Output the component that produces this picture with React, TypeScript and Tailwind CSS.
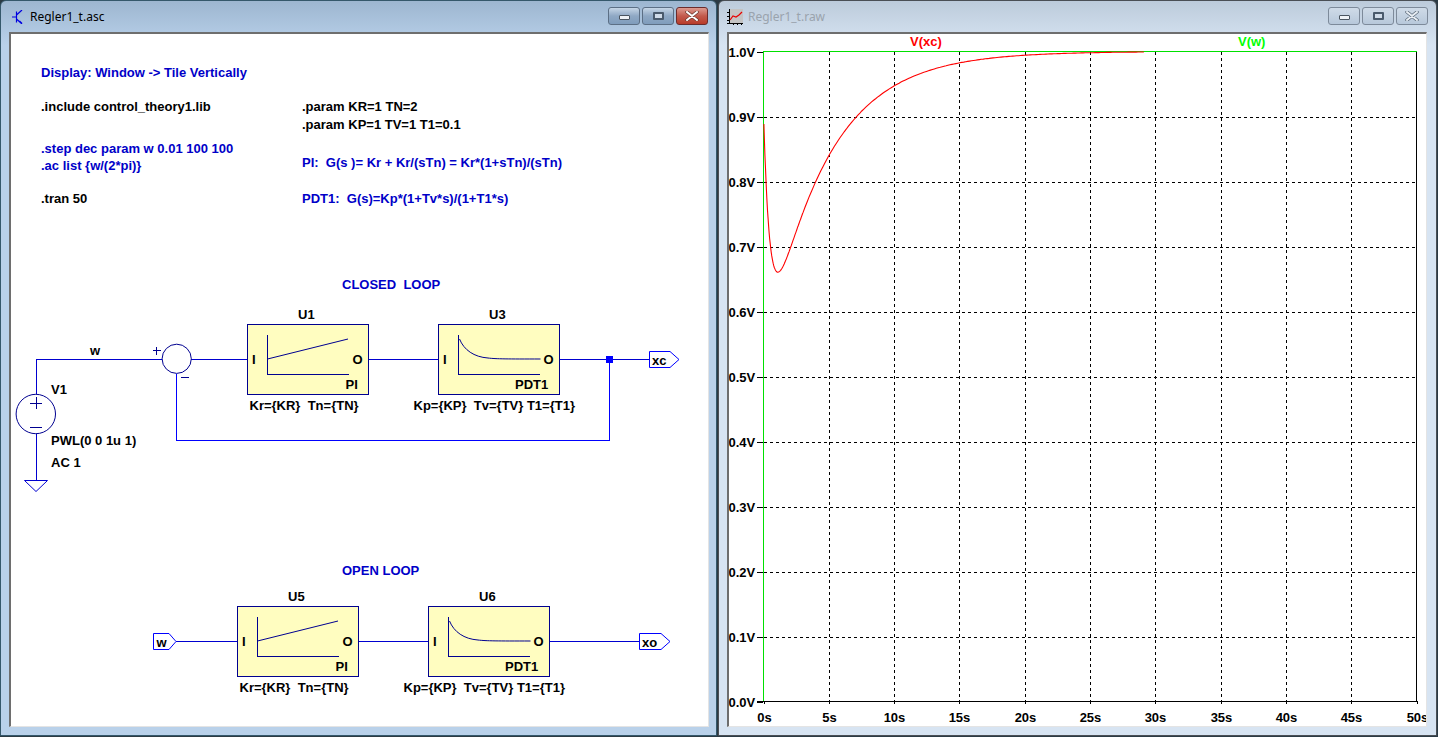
import React from "react";

const sans = "font-['Liberation_Sans',Arial,sans-serif]";
const label = `${sans} text-[13px] font-bold whitespace-pre`;

const WIRE = "#0000d0";
const NAVY = "#000090";
const FLAG = "#0000ff";

type TextProps = { x: number; y: number; children: React.ReactNode; fill?: string; anchor?: "start" | "middle" | "end" };

function T({ x, y, children, fill = "#000000", anchor = "start" }: TextProps) {
	return (
		<text x={x} y={y} fill={fill} textAnchor={anchor} className={label}>
			{children}
		</text>
	);
}

function Wire({ d, color = WIRE }: { d: string; color?: string }) {
	return <path d={d} fill="none" stroke={color} strokeWidth={1} shapeRendering="crispEdges" />;
}

function Block({ dx, dy, name, kind, params, paramX }: { dx: number; dy: number; name: string; kind: "PI" | "PDT1"; params: string; paramX: number }) {
	const decay = "M21.5 15 C26 26 36 33 50 34 C58 35 70 35 102.5 35";
	return (
		<g transform={`translate(${dx} ${dy})`}>
			<rect x={0.5} y={0.5} width={121} height={70} fill="#fffdc0" stroke={NAVY} shapeRendering="crispEdges" />
			<path d="M20.5 10.5 V50.5 H101.5" fill="none" stroke={NAVY} shapeRendering="crispEdges" />
			{kind === "PI" ? (
				<path d="M20.5 35 L101 15" fill="none" stroke={NAVY} />
			) : (
				<path d={decay} fill="none" stroke={NAVY} />
			)}
			<T x={5} y={40}>I</T>
			<T x={105.5} y={40}>O</T>
			<T x={kind === "PI" ? 98.5 : 77} y={65}>{kind}</T>
			<T x={51} y={-5}>{name}</T>
			<T x={paramX} y={86}>{params}</T>
		</g>
	);
}

function Flag({ x, y, name, shoulder, tip }: { x: number; y: number; name: string; shoulder: number; tip: number }) {
	return (
		<g>
			<path
				d={`M${x} ${y - 8} H${shoulder} L${tip} ${y} L${shoulder} ${y + 8} H${x} Z`}
				fill="#ffffff"
				stroke={FLAG}
			/>
			<T x={x + (name === "w" ? 3 : 2.5)} y={y + 5}>{name}</T>
		</g>
	);
}

function Schematic() {
	return (
		<svg viewBox="11 34 697 692" className="block h-[692px] w-[697px] bg-white">
			<T x={41} y={77} fill="#0000c8">Display: Window -&gt; Tile Vertically</T>
			<T x={41} y={111}>.include control_theory1.lib</T>
			<T x={302} y={111}>.param KR=1 TN=2</T>
			<T x={302} y={129}>.param KP=1 TV=1 T1=0.1</T>
			<T x={41} y={153} fill="#0000c8">.step dec param w 0.01 100 100</T>
			<T x={41} y={170} fill="#0000c8">.ac list {"{w/(2*pi)}"}</T>
			<T x={302} y={167} fill="#0000c8">PI:  G(s )= Kr + Kr/(sTn) = Kr*(1+sTn)/(sTn)</T>
			<T x={41} y={203}>.tran 50</T>
			<T x={302} y={203} fill="#0000c8">PDT1:  G(s)=Kp*(1+Tv*s)/(1+T1*s)</T>
			<T x={342} y={289} fill="#0000c8">CLOSED  LOOP</T>
			<T x={342} y={575} fill="#0000c8">OPEN LOOP</T>

			{/* closed loop */}
			<Wire d="M36.5 394 V359.5 H162" />
			<Wire d="M191 359.5 H247" />
			<Wire d="M368 359.5 H438" />
			<Wire d="M559 359.5 H649" />
			<Wire d="M176.5 374 V440.5 H609.5 V359" color="#0000ff" />
			<rect x={606} y={356} width={7} height={7} fill="#0000ff" />
			<Wire d="M36.5 434 V480" />
			<circle cx={35.8} cy={414} r={19.7} fill="none" stroke={NAVY} />
			<path d="M30 403.5 H42 M36.5 397 V409 M30 427.5 H42" fill="none" stroke={NAVY} shapeRendering="crispEdges" />
			<path d="M24.5 480.5 H47.5 L36 491.5 Z" fill="none" stroke={WIRE} />
			<circle cx={176.7} cy={358.8} r={14.6} fill="none" stroke={NAVY} />
			<path d="M153 350.5 H161 M156.5 347 V355 M181 377.5 H189" fill="none" stroke={NAVY} shapeRendering="crispEdges" />
			<T x={90} y={355}>w</T>
			<T x={51} y={394}>V1</T>
			<T x={51} y={445}>PWL(0 0 1u 1)</T>
			<T x={51} y={467}>AC 1</T>
			<Block dx={247} dy={324} name="U1" kind="PI" params="Kr={KR}  Tn={TN}" paramX={2.5} />
			<Block dx={438} dy={324} name="U3" kind="PDT1" params="Kp={KP}  Tv={TV} T1={T1}" paramX={-24.5} />
			<Flag x={649.5} y={359.5} name="xc" shoulder={670} tip={679} />

			{/* open loop */}
			<Wire d="M176 641.5 H237" />
			<Wire d="M358 641.5 H428" />
			<Wire d="M549 641.5 H640" />
			<Block dx={237} dy={606} name="U5" kind="PI" params="Kr={KR}  Tn={TN}" paramX={2.5} />
			<Block dx={428} dy={606} name="U6" kind="PDT1" params="Kp={KP}  Tv={TV} T1={T1}" paramX={-24.5} />
			<Flag x={153.5} y={641.5} name="w" shoulder={169} tip={176} />
			<Flag x={639.5} y={641.5} name="xo" shoulder={661} tip={670} />
		</svg>
	);
}

const X0 = 763.5;
const Y0 = 701.5;
const PER_SEC = 13.06;
const PER_VOLT = 650;

// closed loop step response of PI * PDT1
function response(t: number) {
	return 1 - 0.486 * Math.exp(-0.2216 * t) + 0.395 * Math.exp(-2.051 * t);
}

function buildCurve() {
	const pts: string[] = [];
	for (let t = 0.03; t < 29.25; t += t < 3 ? 0.04 : 0.15) {
		pts.push(`${(X0 + t * PER_SEC).toFixed(1)} ${(Y0 - response(t) * PER_VOLT).toFixed(1)}`);
	}
	return "M" + pts.join(" L");
}

const xTicks = [0, 5, 10, 15, 20, 25, 30, 35, 40, 45, 50];
const yTicks = [1, 0.9, 0.8, 0.7, 0.6, 0.5, 0.4, 0.3, 0.2, 0.1, 0];

function Plot() {
	const curve = React.useMemo(buildCurve, []);
	return (
		<svg viewBox="729 34 697 692" className="block h-[692px] w-[697px] bg-white">
			<T x={910} y={46} fill="#ff0000">V(xc)</T>
			<T x={1238} y={46} fill="#00ff00">V(w)</T>

			{xTicks.slice(1, -1).map((s) => {
				const x = Math.round(X0 + s * PER_SEC) + 0.5;
				return <path key={s} d={`M${x} 52 V701`} stroke="#000000" strokeDasharray="3 3" shapeRendering="crispEdges" />;
			})}
			{yTicks.slice(1, -1).map((v) => {
				const y = Math.round(Y0 - v * PER_VOLT) + 0.5;
				return <path key={v} d={`M764 ${y} H1416`} stroke="#000000" strokeDasharray="3 3" shapeRendering="crispEdges" />;
			})}
			<path d="M757 701.5 H1416.5 V52" fill="none" stroke="#000000" shapeRendering="crispEdges" />
			<path d="M763.5 701 V51.5 H1416.5" fill="none" stroke="#00e000" shapeRendering="crispEdges" />

			{xTicks.map((s) => {
				const x = Math.round(X0 + s * PER_SEC) + 0.5;
				return (
					<g key={s}>
						<path d={`M${x} 701 V704`} stroke="#000000" shapeRendering="crispEdges" />
						<T x={x} y={722} anchor="middle">{s}s</T>
					</g>
				);
			})}
			{yTicks.map((v) => {
				const y = Math.round(Y0 - v * PER_VOLT) + 0.5;
				return (
					<g key={v}>
						<path d={`M757 ${y} H763`} stroke="#000000" shapeRendering="crispEdges" />
						<T x={728.5} y={y + 4.5}>{v.toFixed(1)}V</T>
					</g>
				);
			})}
			<path d={curve} fill="none" stroke="#ff0000" strokeWidth={1.1} />
		</svg>
	);
}

function TransistorIcon() {
	return (
		<svg viewBox="0 0 12 14" className="h-[14px] w-[12px]">
			<path d="M0 7 H4 M4.5 1.5 V12.5 M4.5 5 L10 0 M4.5 9 L10 14 M7.5 11 L10 13.5" fill="none" stroke="#0000e0" strokeWidth={1.2} />
		</svg>
	);
}

function PlotIcon() {
	return (
		<svg viewBox="0 0 16 16" className="h-4 w-4">
			<rect x={2} y={0} width={14} height={14} fill="#c4c4c4" />
			<path d="M2.5 0 V15 M0 14.5 H16 M0 3.5 H2 M0 7.5 H2 M0 11.5 H2 M6.5 14 V16 M10.5 14 V16 M14.5 14 V16" fill="none" stroke="#000000" shapeRendering="crispEdges" />
			<path d="M3 11 L6 7 L9 8 L12 6 L15 3" fill="none" stroke="#e80000" strokeWidth={1.2} />
		</svg>
	);
}

function CaptionButton({ kind, active, close }: { kind: "min" | "max" | "close"; active?: boolean; close?: boolean }) {
	const base = "flex h-[18px] w-[32px] items-center justify-center rounded-[3px] border";
	const skin = close
		? "border-[#6b2c2c] bg-gradient-to-b from-[#dc9a90] via-[#c25a4c] to-[#b83a28]"
		: active
			? "border-[#5c6f85] bg-gradient-to-b from-[#c6d6e6] via-[#8fa8c4] to-[#7f9cbc]"
			: "border-[#7d8a9a] bg-gradient-to-b from-[#cfdbe8] to-[#b7c8da]";
	return (
		<div className={`${base} ${skin}`}>
			{kind === "min" && <div className="mt-[3px] h-[5px] w-[11px] rounded-[1px] border border-[#4a5560] bg-[#eef2f6]" />}
			{kind === "max" && <div className="h-[8px] w-[11px] rounded-[1px] border-[2px] border-[#4a5a6c] bg-[#d0dbe8]" />}
			{kind === "close" && (
				<svg viewBox="0 0 14 10" className="h-[10px] w-[14px]">
					<path d="M2 1 L12 9 M12 1 L2 9" stroke={close ? "#6a3a30" : "#5a6878"} strokeWidth={3.4} strokeLinecap="round" />
					<path d="M2 1 L12 9 M12 1 L2 9" stroke={close ? "#ffffff" : "#e8eef4"} strokeWidth={2} strokeLinecap="round" />
				</svg>
			)}
		</div>
	);
}

type WindowProps = {
	title: string;
	active?: boolean;
	icon: React.ReactNode;
	children: React.ReactNode;
};

function Window({ title, active, icon, children }: WindowProps) {
	return (
		<div
			className={`flex h-[736px] flex-col rounded-t-[6px] border pl-[8px] pr-[8px] ${
				active
					? "w-[717px] border-[#35586b] bg-gradient-to-b from-[#9db6d0] from-0% to-[#b9d1ea] to-[6%]"
					: "w-[719px] border-[#4a4f55] bg-gradient-to-b from-[#bccbdb] from-0% to-[#d7e4f2] to-[6%]"
			}`}
		>
			<div className="flex h-[31px] shrink-0 items-center">
				<div className={`flex w-[21px] justify-start ${active ? "pl-[3px]" : ""}`}>{icon}</div>
				<span
					className={`font-['Noto_Sans',sans-serif] text-[12px] ${active ? "text-black" : "text-[#9aa3ad]"}`}
				>
					{title}
				</span>
				<div className="ml-auto flex gap-[2px] pb-[5px] pt-[3px]">
					<CaptionButton kind="min" active={active} />
					<CaptionButton kind="max" active={active} />
					<CaptionButton kind="close" active={active} close={active} />
				</div>
			</div>
			<div className="w-[700px] border-b border-l-2 border-r border-t-2 border-b-[#e4e4e4] border-l-[#6e6e6e] border-r-[#e4e4e4] border-t-[#6e6e6e]">
				{children}
			</div>
		</div>
	);
}

export default function App() {
	return (
		<div className="flex h-[737px] w-[1438px] items-start gap-[1px] overflow-hidden bg-[#2b3a44]">
			<Window title="Regler1_t.asc" active icon={<TransistorIcon />}>
				<Schematic />
			</Window>
			<Window title="Regler1_t.raw" icon={<PlotIcon />}>
				<Plot />
			</Window>
		</div>
	);
}
